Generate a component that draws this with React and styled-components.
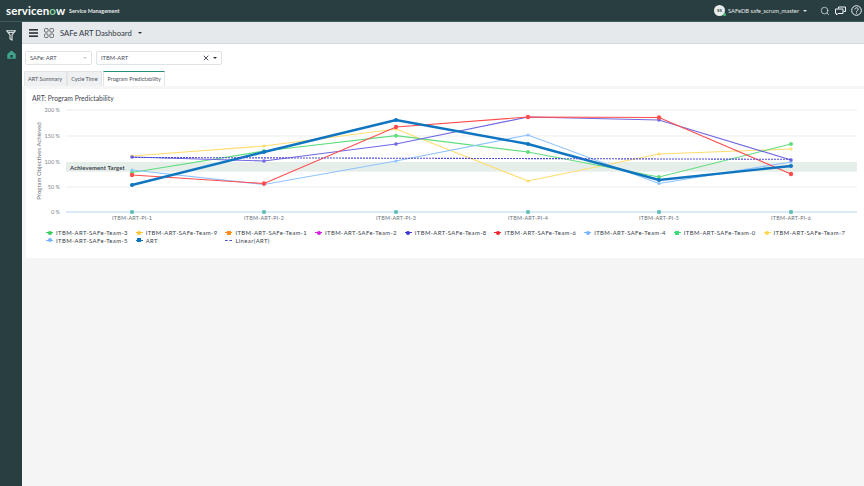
import React from 'react';
import styled, { createGlobalStyle } from 'styled-components';
import { Search, X } from 'lucide-react';

const GlobalStyle = createGlobalStyle`
  html, body { margin: 0; padding: 0; height: 100%; }
  body { background: #f5f5f5; font-family: Lato, "Open Sans", sans-serif; color: #343d47; overflow: hidden; }
  #root { height: 100%; }
`;

const Page = styled.div`
  width: 864px;
  height: 486px;
  display: flex;
  flex-direction: column;
  overflow: hidden;
`;

const TopBar = styled.header`
  height: 21px;
  flex: none;
  display: flex;
  align-items: center;
  padding: 0 2px 0 6px;
  background: #293e40;
  border-bottom: 1px solid #3f5c5c;
  color: #fff;
`;

const Logo = styled.div`
  font-size: 11.5px;
  font-weight: 700;
  letter-spacing: 0.1px;
  width: 63px;
  span { color: #81d0a0; }
`;

const Product = styled.div`
  font-size: 5.4px;
  font-weight: 700;
  flex: 1;
  color: #e6eaea;
`;

const UserMenu = styled.div`
  display: flex;
  align-items: center;
  font-size: 5.8px;
  color: #e6eaea;
  margin-right: 13px;
`;

const Avatar = styled.div`
  position: relative;
  width: 11px;
  height: 11px;
  border-radius: 50%;
  background: #e8ecec;
  color: #293e40;
  font-size: 4.5px;
  font-weight: 700;
  display: flex;
  align-items: center;
  justify-content: center;
  margin-right: 3px;
  &::after {
    content: '';
    position: absolute;
    right: -1px;
    bottom: 0;
    width: 3px;
    height: 3px;
    border-radius: 50%;
    background: #4cc27a;
  }
`;

const Caret = styled.span`
  display: inline-block;
  width: 0;
  height: 0;
  margin-left: ${p => p.$gap || 4}px;
  border-left: ${p => p.$size || 2}px solid transparent;
  border-right: ${p => p.$size || 2}px solid transparent;
  border-top: ${p => p.$size || 2}px solid ${p => p.$color || '#dfe4e4'};
`;

const TopIcons = styled.div`
  display: flex;
  align-items: center;
  gap: 5px;
  color: #f0f3f3;
`;

const Body = styled.div`
  flex: 1;
  display: flex;
  min-height: 0;
`;

const SideNav = styled.nav`
  width: 22px;
  flex: none;
  background: #293e40;
  display: flex;
  flex-direction: column;
  align-items: center;
  padding-top: 8px;
  gap: 9px;
`;

const Main = styled.main`
  flex: 1;
  min-width: 0;
  display: flex;
  flex-direction: column;
`;

const TitleBar = styled.div`
  height: 22px;
  flex: none;
  display: flex;
  align-items: center;
  padding-left: 7px;
  background: #e6e9eb;
  border-bottom: 1px solid #d5d8da;
  box-sizing: border-box;
  color: #2e3a44;
`;

const GridIcon = styled.svg`
  margin-left: 6px;
`;

const DashboardTitle = styled.div`
  font-size: 7.7px;
  font-weight: 400;
  margin-left: 6px;
  color: #2f3943;
`;

const FilterRow = styled.div`
  height: 27px;
  flex: none;
  display: flex;
  align-items: center;
  gap: 4px;
  padding-left: 3px;
  background: #fff;
`;

const Select = styled.div`
  width: ${p => p.$width}px;
  height: 14px;
  box-sizing: border-box;
  display: flex;
  align-items: center;
  padding: 0 4px;
  border: 1px solid #e0e2e4;
  border-radius: 2px;
  background: #fff;
  font-size: 5.8px;
  color: #49525c;
`;

const SelectText = styled.div`
  flex: 1;
`;

const TabRow = styled.div`
  height: 14.5px;
  flex: none;
  display: flex;
  align-items: stretch;
  padding-left: 1.5px;
  background: #fff;
`;

const Tab = styled.div`
  display: flex;
  align-items: center;
  box-sizing: border-box;
  padding: 0 3.5px;
  margin-left: ${p => (p.$active ? 1 : 0)}px;
  font-size: 5.5px;
  color: #4b545e;
  background: ${p => (p.$active ? '#fff' : '#eff0f1')};
  border: 1px solid #e2e4e6;
  border-bottom: none;
  border-top: ${p => (p.$active ? '1px solid #278e7e' : '1px solid #e2e4e6')};
`;

const Content = styled.div`
  flex: 1;
  background: #f5f5f5;
  padding: 3px 0 0 4px;
`;

const Card = styled.section`
  height: 169.5px;
  background: #fff;
  padding-top: 5px;
  box-sizing: border-box;
`;

const CardTitle = styled.h2`
  margin: 0 0 0 6px;
  font-size: 6.8px;
  line-height: 9px;
  font-weight: 400;
  color: #3f4852;
`;

const ChartSvg = styled.svg`
  display: block;
  margin-top: 0.5px;
  text {
    font-family: Lato, "Open Sans", sans-serif;
  }
`;

const Legend = styled.div`
  display: grid;
  grid-template-columns: repeat(9, 89.7px);
  padding: 2px 0 0 20px;
`;

const LegendItem = styled.div`
  display: flex;
  align-items: center;
  height: 7.5px;
  font-size: 5.9px;
  letter-spacing: 0.4px;
  color: #39424c;
  white-space: nowrap;
`;

const Swatch = styled.span`
  position: relative;
  width: 7px;
  height: 1.2px;
  margin-right: 3px;
  background: ${p => p.$color};
  &::after {
    content: '';
    position: absolute;
    left: 1.5px;
    top: -1.4px;
    width: 4px;
    height: 4px;
    background: ${p => p.$color};
    border-radius: ${p => (p.$square ? 0 : '50%')};
  }
`;

const DashSwatch = styled.span`
  width: 7px;
  margin-right: 3px;
  border-top: 1px dashed #4f4ad6;
`;

const xs = [132, 264, 396, 528, 659, 791];

const series = [
  { color: '#ffdc6e', w: 1.2, r: 1.6, ys: [156, 146, 129, 181, 154, 149] },
  { color: '#62dd7e', w: 1.2, r: 2, ys: [172.5, 151, 135.7, 152, 177, 144] },
  { color: '#8fc3ff', w: 1.2, r: 1.6, ys: [170, 184.5, 161, 135, 183.5, 162] },
  { color: '#7068e0', w: 1.2, r: 1.8, ys: [157, 161, 144, 117, 120, 160] },
  { color: '#ff4d4d', w: 1.2, r: 2.2, ys: [175, 183.5, 127, 117, 117.5, 174] },
  { color: '#0f75c0', w: 2.4, r: 2, ys: [185, 152, 120, 144, 180, 166] },
];

const ticks = [
  { label: '200 %', y: 110 },
  { label: '150 %', y: 136 },
  { label: '100 %', y: 161.5 },
  { label: '50 %', y: 187 },
];

const legendItems = [
  ['ITBM-ART-SAFe-Team-3', '#34d058'],
  ['ITBM-ART-SAFe-Team-9', '#ffc233'],
  ['ITBM-ART-SAFe-Team-1', '#ff8c1a', true],
  ['ITBM-ART-SAFe-Team-2', '#d81fe0'],
  ['ITBM-ART-SAFe-Team-8', '#3d36d8'],
  ['ITBM-ART-SAFe-Team-6', '#f5222d'],
  ['ITBM-ART-SAFe-Team-4', '#78b5ff'],
  ['ITBM-ART-SAFe-Team-0', '#3ddc78', true],
  ['ITBM-ART-SAFe-Team-7', '#ffd84d'],
  ['ITBM-ART-SAFe-Team-5', '#78b5ff'],
  ['ART', '#0f75c0', true],
];

const Chart = () => (
  <ChartSvg width="838" height="124" viewBox="26 103 838 124">
    <rect x="66" y="162" width="791" height="9.7" fill="#e6eeea" />
    {ticks.map(t => (
      <g key={t.label}>
        {t.y !== 161.5 && <rect x="66" y={t.y - 0.7} width="791" height="1.4" fill="#f3f3f3" />}
        <text x="60" y={t.y + 2} textAnchor="end" fontSize="5.5" fill="#7d858c">{t.label}</text>
      </g>
    ))}
    <text x="60" y="214" textAnchor="end" fontSize="5.5" fill="#7d858c">0 %</text>
    <rect x="66" y="211.4" width="791" height="1.2" fill="#c4dcf6" />
    <text x="41" y="161" textAnchor="middle" fontSize="6" fill="#6a727a" transform="rotate(-90 41 161)">
      Program Objectives Achieved
    </text>
    <text x="70" y="169.5" fontSize="5.9" fontWeight="700" letterSpacing="0.15" fill="#39424c">Achievement Target</text>
    {series.map((s, i) => (
      <g key={i}>
        <polyline
          points={s.ys.map((y, j) => `${xs[j]},${y}`).join(' ')}
          fill="none"
          stroke={s.color}
          strokeWidth={s.w}
        />
        {s.ys.map((y, j) => (
          <circle key={j} cx={xs[j]} cy={y} r={s.r} fill={s.color} />
        ))}
      </g>
    ))}
    <line x1="132" y1="157.5" x2="791" y2="159.3" stroke="#4f4ad6" strokeWidth="1.1" strokeDasharray="2 1" />
    {xs.map(x => (
      <rect key={x} x={x - 1.8} y="210.2" width="3.6" height="3.6" fill="#5bbdb4" />
    ))}
    {xs.map((x, i) => (
      <text key={x} x={x} y="220" textAnchor="middle" fontSize="5.4" letterSpacing="0.25" fill="#6a727a">
        ITBM-ART-PI-{i + 1}
      </text>
    ))}
  </ChartSvg>
);

const App = () => (
  <Page>
    <GlobalStyle />
    <TopBar>
      <Logo>servicen<span>o</span>w</Logo>
      <Product>Service Management</Product>
      <UserMenu>
        <Avatar>SS</Avatar>
        SAFeDB safe_scrum_master
        <Caret />
      </UserMenu>
      <TopIcons>
        <Search size={10} strokeWidth={1.6} />
        <svg width="11" height="10" viewBox="0 0 11 10" fill="none" stroke="currentColor" strokeWidth="1">
          <path d="M3.5 2.5V1h7v4.5H8.5" />
          <path d="M.5 3h7.5v4.5H3L1.5 9V7.5h-1z" />
        </svg>
        <svg width="11" height="11" viewBox="0 0 11 11" fill="none" stroke="currentColor" strokeWidth="1">
          <circle cx="5.5" cy="5.5" r="4.8" />
          <path d="M4 4.3c0-2 3.2-2 3.2 0 0 1.2-1.7 1.2-1.7 2.4" />
          <path d="M5.5 7.6v1" />
        </svg>
      </TopIcons>
    </TopBar>
    <Body>
      <SideNav>
        <svg width="10" height="11" viewBox="0 0 10 11" fill="none" stroke="#dfe5e5" strokeWidth="1.1">
          <path d="M.8.8h8.4L6 5v5L4 8.8V5z" />
          <path d="M2.2 2.4h5.6" />
        </svg>
        <svg width="9" height="9" viewBox="0 0 9 9" fill="#3fa58a">
          <path d="M4.5.5 8.7 4v4.7H.3V4z" />
          <rect x="3.3" y="5" width="2.4" height="2.6" fill="#293e40" />
        </svg>
      </SideNav>
      <Main>
        <TitleBar>
          <svg width="9" height="8" viewBox="0 0 9 8" fill="#2b333b">
            <rect y="0" width="9" height="1.6" />
            <rect y="3.2" width="9" height="1.6" />
            <rect y="6.4" width="9" height="1.6" />
          </svg>
          <GridIcon width="10" height="10" viewBox="0 0 10 10" fill="none" stroke="#49525c" strokeWidth=".8">
            <rect x=".5" y=".5" width="3.6" height="3.6" rx="1" />
            <rect x="5.9" y=".5" width="3.6" height="3.6" rx="1" />
            <rect x=".5" y="5.9" width="3.6" height="3.6" rx="1" />
            <rect x="5.9" y="5.9" width="3.6" height="3.6" rx="1" />
          </GridIcon>
          <DashboardTitle>SAFe ART Dashboard</DashboardTitle>
          <Caret $size={2.8} $gap={6} $color="#2b333b" />
        </TitleBar>
        <FilterRow>
          <Select $width={67}>
            <SelectText>SAFe: ART</SelectText>
            <Caret $size={2} $color="#c6cacd" $gap={0} />
          </Select>
          <Select $width={126}>
            <SelectText>ITBM-ART</SelectText>
            <X size={8} strokeWidth={2.6} color="#2b333b" />
            <Caret $size={2.4} $gap={3} $color="#2b333b" />
          </Select>
        </FilterRow>
        <TabRow>
          <Tab>ART Summary</Tab>
          <Tab>Cycle Time</Tab>
          <Tab $active>Program Predictability</Tab>
        </TabRow>
        <Content>
          <Card>
            <CardTitle>ART: Program Predictability</CardTitle>
            <Chart />
            <Legend>
              {legendItems.map(([name, color, square]) => (
                <LegendItem key={name}>
                  <Swatch $color={color} $square={square} />
                  {name}
                </LegendItem>
              ))}
              <LegendItem>
                <DashSwatch />
                Linear(ART)
              </LegendItem>
            </Legend>
          </Card>
        </Content>
      </Main>
    </Body>
  </Page>
);

export default App;
